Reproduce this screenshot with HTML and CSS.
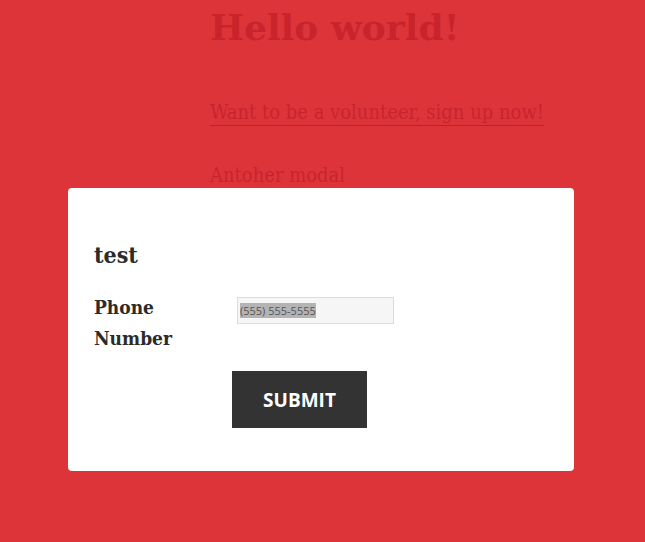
FILE: index.html
```html
<!DOCTYPE html>
<html>
<head>
<meta charset="utf-8">
<link rel="stylesheet" href="styles.css">
</head>
<body>
<main class="page">
  <h1 class="hello">Hello world!</h1>
  <p class="line line-first"><a class="link" href="#">Want to be a volunteer, sign up now!</a></p>
  <p class="line line-second">Antoher modal</p>
</main>
<div class="modal">
  <h2 class="modal-title">test</h2>
  <form class="form">
    <div class="row">
      <label class="label">Phone Number</label>
      <div class="field"><span class="ph">(555) 555-5555</span></div>
    </div>
    <div class="actions">
      <button class="submit" type="button">SUBMIT</button>
    </div>
  </form>
</div>
</body>
</html>
```
FILE: styles.css
```css
html, body {
  margin: 0;
  padding: 0;
}
body {
  background: #dd343a;
  width: 645px;
  height: 542px;
  overflow: hidden;
  position: relative;
  font-family: "DejaVu Serif", "Liberation Serif", serif;
}
.page {
  padding: 0 0 0 210px;
  color: #c9242c;
  display: flow-root;
}
.hello {
  margin: 3px 0 0;
  font-size: 36px;
  line-height: 48px;
  font-weight: bold;
}
.line {
  margin: 0;
  font-family: "DejaVu Serif Condensed", "DejaVu Serif", serif;
  font-stretch: condensed;
  font-size: 20px;
  line-height: 30px;
}
.line-first {
  margin-top: 46px;
}
.line-second {
  margin-top: 33px;
}
.link {
  color: #c9242c;
  text-decoration: none;
  border-bottom: 1px solid #c02128;
  padding-bottom: 1px;
}
.modal {
  position: absolute;
  left: 68px;
  top: 188px;
  width: 506px;
  height: 283px;
  background: #fff;
  border-radius: 4px;
  box-sizing: border-box;
  padding: 51px 26px 0;
  color: #2b2b2b;
}
.modal-title {
  margin: 0;
  font-family: "DejaVu Serif Condensed", "DejaVu Serif", serif;
  font-stretch: condensed;
  font-size: 23px;
  line-height: 32px;
  font-weight: bold;
}
.form {
  margin-top: 21px;
}
.row {
  display: flex;
  align-items: flex-start;
}
.label {
  width: 143px;
  font-family: "DejaVu Serif Condensed", "DejaVu Serif", serif;
  font-stretch: condensed;
  font-size: 19px;
  line-height: 31px;
  font-weight: bold;
}
.field {
  margin-top: 5px;
  width: 157px;
  height: 27px;
  box-sizing: border-box;
  background: #f6f6f6;
  border: 1px solid #dcdcdc;
  padding: 5px 2px 0;
  font-family: "Open Sans", sans-serif;
  font-size: 11px;
  line-height: 15px;
  color: #555;
}
.ph {
  background: #b4b4b4;
}
.actions {
  margin-top: 17px;
  padding-left: 138px;
}
.submit {
  display: block;
  width: 135px;
  height: 57px;
  border: 0;
  background: #333;
  color: #fff;
  font-family: "Open Sans", sans-serif;
  font-weight: bold;
  font-size: 19px;
  padding: 0;
}
```
